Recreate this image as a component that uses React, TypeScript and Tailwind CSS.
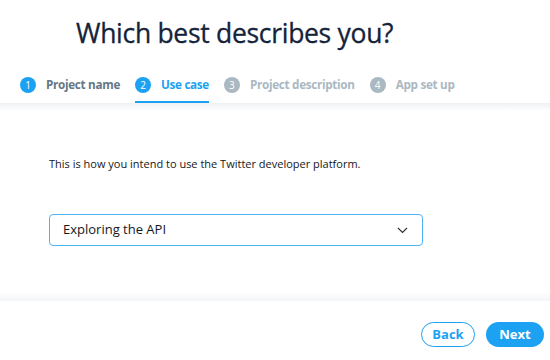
import React from "react";

const font = { fontFamily: '"Open Sans", "Noto Sans", sans-serif' };

function Step({ n, label, state }: { n: number; label: string; state: "done" | "active" | "todo" }) {
  const circle = state === "todo" ? "bg-[#aab8c2]" : "bg-[#1da1f2]";
  const text =
    state === "done" ? "text-[#657786]" : state === "active" ? "text-[#1da1f2]" : "text-[#aab8c2]";
  return (
    <div className="relative flex items-center h-full">
      <div className={`w-[16px] h-[16px] rounded-full ${circle} flex items-center justify-center text-white text-[10px] leading-none`}>
        {n}
      </div>
      <span className={`ml-[10px] text-[11.7px] font-bold ${text} tracking-[-0.3px]`}>{label}</span>
      {state === "active" && <div className="absolute left-0 right-0 bottom-0 h-[2px] bg-[#1da1f2]" />}
    </div>
  );
}

export default function App() {
  return (
    <div className="w-[550px] h-[360px] bg-white flex flex-col overflow-hidden" style={font}>
      <div className="h-[103px] flex flex-col">
        <h1 className="pl-[76px] pt-[15px] text-[26.5px] leading-[36px] font-medium text-[#14233a] tracking-[-0.3px] [-webkit-text-stroke:0.3px_#14233a]">
          Which best describes you?
        </h1>
        <div className="mt-auto h-[36px] pl-[20px] flex items-stretch gap-[15px]">
          <Step n={1} label="Project name" state="done" />
          <Step n={2} label="Use case" state="active" />
          <Step n={3} label="Project description" state="todo" />
          <Step n={4} label="App set up" state="todo" />
        </div>
      </div>
      <div className="h-[8px] bg-gradient-to-b from-[#eef1f3] to-white" />
      <div className="flex-1 pl-[49px] pt-[45px]">
        <p className="text-[11px] text-[#14171a] leading-[16px]">
          This is how you intend to use the Twitter developer platform.
        </p>
        <div className="mt-[42px] w-[374px] h-[32px] border border-[#4db5f5] rounded-[4px] flex items-center pl-[13px] pr-[14px]">
          <span className="text-[13px] text-[#14171a]">Exploring the API</span>
          <svg className="ml-auto" width="11" height="7" viewBox="0 0 11 7" fill="none">
            <path d="M1 1l4.5 4.5L10 1" stroke="#333" strokeWidth="1.2" />
          </svg>
        </div>
      </div>
      <div className="h-[9px] bg-gradient-to-b from-white to-[#f3f5f7]" />
      <div className="h-[59px] flex items-start justify-end pt-[21px] pr-[6px] gap-[11px]">
        <button className="h-[25px] w-[54px] rounded-full border border-[#1da1f2] text-[#1da1f2] text-[13px] font-bold flex items-center justify-center">
          Back
        </button>
        <button className="h-[25px] w-[58px] rounded-full bg-[#1da1f2] text-white text-[13px] font-bold flex items-center justify-center">
          Next
        </button>
      </div>
    </div>
  );
}
